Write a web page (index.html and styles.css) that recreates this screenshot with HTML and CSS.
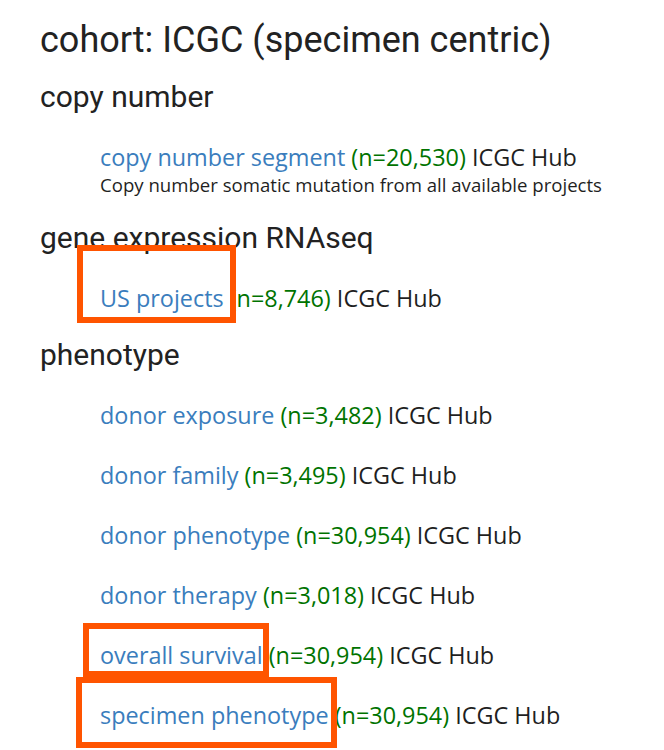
FILE: index.html
```html
<!DOCTYPE html>
<html lang="en">
<head>
<meta charset="utf-8">
<title>cohort: ICGC (specimen centric)</title>
<link rel="stylesheet" href="styles.css">
</head>
<body>
<main class="page">
  <h1 class="title">cohort: ICGC (specimen centric)</h1>

  <section class="section">
    <h2 class="section-title">copy number</h2>
    <ul class="datasets">
      <li class="dataset">
        <div class="dataset-line"><a class="dataset-link" href="#">copy number segment</a> <span class="count">(n=20,530)</span> <span class="hub">ICGC Hub</span></div>
        <div class="dataset-desc">Copy number somatic mutation from all available projects</div>
      </li>
    </ul>
  </section>

  <section class="section">
    <h2 class="section-title">gene expression RNAseq</h2>
    <ul class="datasets">
      <li class="dataset">
        <div class="dataset-line"><a class="dataset-link" href="#">US projects</a> <span class="count">(n=8,746)</span> <span class="hub">ICGC Hub</span></div>
      </li>
    </ul>
  </section>

  <section class="section">
    <h2 class="section-title">phenotype</h2>
    <ul class="datasets">
      <li class="dataset">
        <div class="dataset-line"><a class="dataset-link" href="#">donor exposure</a> <span class="count">(n=3,482)</span> <span class="hub">ICGC Hub</span></div>
      </li>
      <li class="dataset">
        <div class="dataset-line"><a class="dataset-link" href="#">donor family</a> <span class="count">(n=3,495)</span> <span class="hub">ICGC Hub</span></div>
      </li>
      <li class="dataset">
        <div class="dataset-line"><a class="dataset-link" href="#">donor phenotype</a> <span class="count">(n=30,954)</span> <span class="hub">ICGC Hub</span></div>
      </li>
      <li class="dataset">
        <div class="dataset-line"><a class="dataset-link" href="#">donor therapy</a> <span class="count">(n=3,018)</span> <span class="hub">ICGC Hub</span></div>
      </li>
      <li class="dataset">
        <div class="dataset-line"><a class="dataset-link" href="#">overall survival</a> <span class="count">(n=30,954)</span> <span class="hub">ICGC Hub</span></div>
      </li>
      <li class="dataset">
        <div class="dataset-line"><a class="dataset-link" href="#">specimen phenotype</a> <span class="count">(n=30,954)</span> <span class="hub">ICGC Hub</span></div>
      </li>
    </ul>
  </section>

  <div class="highlight highlight-us"></div>
  <div class="highlight highlight-survival"></div>
  <div class="highlight highlight-specimen"></div>
</main>
</body>
</html>
```
FILE: styles.css
```css
html, body {
  margin: 0;
  padding: 0;
  background: #ffffff;
}

.page {
  position: relative;
  height: 750px;
  overflow: hidden;
  padding: 20px 0 0 40px;
  box-sizing: border-box;
  color: #222222;
}

.title {
  margin: 0 0 20px;
  font-family: Roboto, "Liberation Sans", sans-serif;
  font-weight: 400;
  font-size: 36px;
  line-height: 40px;
  color: #222222;
}

.section + .section {
  margin-top: 25px;
}

.section-title {
  margin: 0;
  font-family: Roboto, "Liberation Sans", sans-serif;
  font-weight: 400;
  font-size: 30px;
  line-height: 33px;
  color: #222222;
}

.datasets {
  list-style: none;
  margin: 29px 0 0;
  padding: 0 0 0 60px;
  display: flex;
  flex-direction: column;
  gap: 30px;
}

.dataset {
  font-family: "Open Sans", "Noto Sans", sans-serif;
}

.dataset-line {
  font-size: 23.4px;
  line-height: 30px;
  white-space: nowrap;
}

.dataset-link {
  color: #3a7dbd;
  text-decoration: none;
}

.count {
  color: #007300;
}

.hub {
  color: #1f1f1f;
}

.dataset-desc {
  margin-top: 2px;
  font-size: 18.6px;
  line-height: 22px;
  color: #1f1f1f;
  white-space: nowrap;
}

.highlight {
  position: absolute;
  border: 6px solid #ff5400;
  box-sizing: border-box;
  pointer-events: none;
}

.highlight-us {
  left: 77px;
  top: 245px;
  width: 159px;
  height: 78px;
}

.highlight-survival {
  left: 83px;
  top: 623px;
  width: 186px;
  height: 54px;
}

.highlight-specimen {
  left: 76px;
  top: 677px;
  width: 261px;
  height: 71px;
}
```
